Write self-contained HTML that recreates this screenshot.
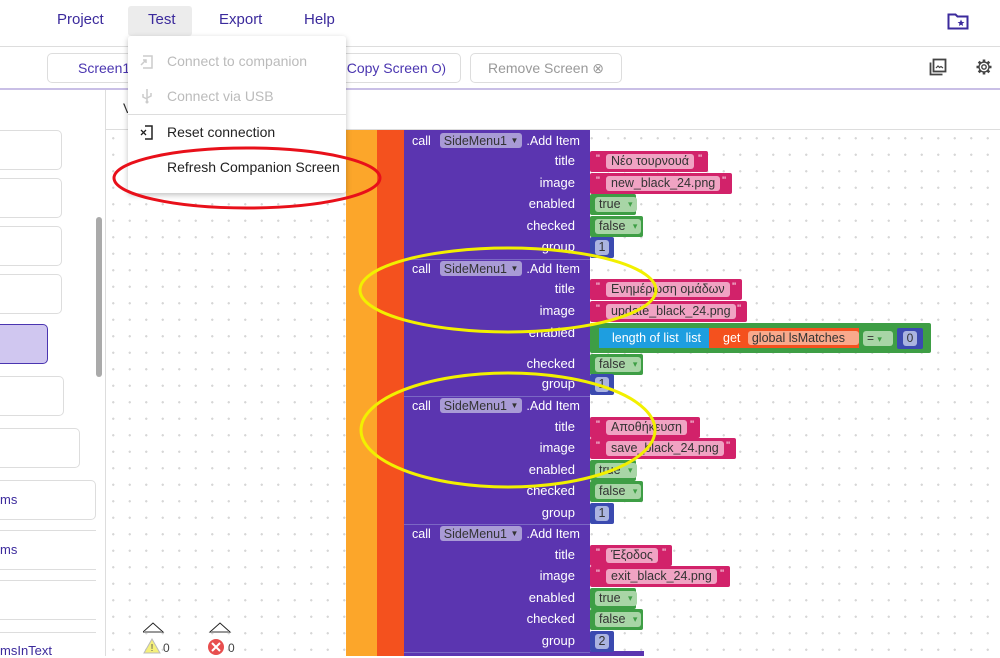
<!DOCTYPE html>
<html><head><meta charset="utf-8"><style>
*{margin:0;padding:0;box-sizing:border-box}
body{width:1000px;height:656px;overflow:hidden;position:relative;background:#fff;font-family:"Liberation Sans",sans-serif}
.a{position:absolute}
.menu{font-size:15px;color:#3b2a9c;top:11px}
.btn{position:absolute;top:53px;height:30px;border:1px solid #ddd;border-radius:5px;font-size:14px;color:#4a35b0;line-height:28px;text-align:center;background:#fff}
.ws{left:106px;top:130px;width:894px;height:526px;background-color:#fff;background-image:radial-gradient(circle,#d6d6d6 1px,transparent 1.3px);background-size:16.5px 16.5px;background-position:-1px 0}
.lab{position:absolute;color:#fff;font-size:13px;right:425px;text-align:right;height:16px;line-height:16px}
.str{position:absolute;left:590px;height:21px;background:#d2226a;border-radius:2px}
.str .f{position:absolute;left:16px;top:3px;height:15px;background:#f0a3c3;border-radius:3px;color:#333;font-size:12.5px;line-height:15px;padding:0 5px;white-space:nowrap}
.str .q{position:absolute;top:2px;color:#fff;font-size:11px}
.bool{position:absolute;left:590px;height:21px;background:#3e9e45;border-radius:2px}
.bool .f{position:absolute;left:5px;top:3px;height:15px;background:#a8d5a6;border-radius:3px;color:#333;font-size:12.5px;line-height:15px;padding:0 16px 0 4px}
.bool .f:after{content:"▾";position:absolute;right:4px;top:0;color:#3e9e45;font-size:9px}
.num{position:absolute;left:590px;width:24px;height:21px;background:#3b4ab0;border-radius:2px}
.num .f{position:absolute;left:5px;top:3px;width:14px;height:15px;background:#aab4e0;border-radius:3px;color:#333;font-size:12.5px;line-height:15px;text-align:center}
.call{position:absolute;left:412px;color:#fff;font-size:12.5px;height:16px;line-height:16px;white-space:nowrap}
.call .c{display:inline-block;background:#a99bd6;color:#333;border-radius:3px;padding:0 4px;margin:0 4px 0 9px;height:15px;line-height:15px}
.call .c i{font-style:normal;font-size:8px;vertical-align:2px}
.sep{position:absolute;left:404px;width:186px;height:1px;background:#7b68c4}
.dd{font-size:14px;color:#bbb}
</style></head><body>
<div class="a" style="left:128px;top:6px;width:64px;height:30px;background:#ececec;border-radius:3px"></div>
<div class="a menu" style="left:57px">Project</div>
<div class="a menu" style="left:148px">Test</div>
<div class="a menu" style="left:219px">Export</div>
<div class="a menu" style="left:304px">Help</div>
<svg class="a" style="left:947px;top:12px" width="22" height="18" viewBox="0 0 22 18"><path d="M1.5 2.5h7l2 2h10v12h-19z" fill="none" stroke="#3b2a9c" stroke-width="2"/><path d="M14 7.5l1 2.4 2.4.2-1.9 1.5.6 2.4-2.1-1.3-2.1 1.3.6-2.4-1.9-1.5 2.4-.2z" fill="#3b2a9c"/></svg>
<div class="a" style="left:0;top:46px;width:1000px;height:1px;background:#ddd"></div>
<div class="btn" style="left:47px;width:140px;text-align:left;padding-left:30px">Screen1</div>
<div class="btn" style="left:320px;width:141px;text-align:right;padding-right:14px">Copy Screen <span style="font-size:13px">O)</span></div>
<div class="btn" style="left:470px;width:152px;color:#999">Remove Screen ⊗</div>
<svg class="a" style="left:929px;top:58px" width="18" height="18" viewBox="0 0 18 18"><rect x="4.5" y="1.5" width="12" height="12" fill="none" stroke="#444" stroke-width="1.8"/><path d="M1.5 4.5v12h12" fill="none" stroke="#444" stroke-width="1.8"/><path d="M7 10l2-2 1.5 1.5 1.5-1 2 1.5" fill="none" stroke="#444" stroke-width="1.2"/></svg>
<svg class="a" style="left:975px;top:58px" width="18" height="18" viewBox="0 0 18 18"><g stroke="#444" stroke-width="2.6"><path d="M9 1.5v15M1.5 9h15M3.7 3.7l10.6 10.6M14.3 3.7L3.7 14.3"/></g><circle cx="9" cy="9" r="5.6" fill="#444"/><circle cx="9" cy="9" r="4.3" fill="#fff"/><circle cx="9" cy="9" r="2.2" fill="none" stroke="#444" stroke-width="1.4"/></svg>
<div class="a" style="left:0;top:88px;width:1000px;height:2px;background:#c9bfe6"></div>
<div class="a" style="left:105px;top:90px;width:1px;height:566px;background:#ddd"></div>
<div class="a" style="left:106px;top:129px;width:894px;height:1px;background:#ddd"></div>
<div class="a" style="left:123px;top:100px;font-size:14px;color:#333">V</div>
<div class="a" style="left:0;top:130px;width:62px;height:40px;border:1px solid #ddd;border-left:none;border-radius:0 5px 5px 0"></div>
<div class="a" style="left:0;top:178px;width:62px;height:40px;border:1px solid #ddd;border-left:none;border-radius:0 5px 5px 0"></div>
<div class="a" style="left:0;top:226px;width:62px;height:40px;border:1px solid #ddd;border-left:none;border-radius:0 5px 5px 0"></div>
<div class="a" style="left:0;top:274px;width:62px;height:40px;border:1px solid #ddd;border-left:none;border-radius:0 5px 5px 0"></div>
<div class="a" style="left:0;top:324px;width:48px;height:40px;border:1px solid #4a35b0;border-left:none;border-radius:0 5px 5px 0;background:#d0c7f0"></div>
<div class="a" style="left:0;top:376px;width:64px;height:40px;border:1px solid #ddd;border-left:none;border-radius:0 5px 5px 0"></div>
<div class="a" style="left:0;top:428px;width:80px;height:40px;border:1px solid #ddd;border-left:none;border-radius:0 5px 5px 0"></div>
<div class="a" style="left:0;top:480px;width:96px;height:40px;border:1px solid #ddd;border-left:none;border-radius:0 5px 5px 0"></div>
<div class="a" style="left:0;top:492px;font-size:13px;color:#3b2a9c">ms</div>
<div class="a" style="left:0;top:530px;width:96px;height:1px;background:#ddd"></div>
<div class="a" style="left:0;top:542px;font-size:13px;color:#3b2a9c">ms</div>
<div class="a" style="left:0;top:569px;width:96px;height:1px;background:#ddd"></div>
<div class="a" style="left:0;top:580px;width:96px;height:1px;background:#ddd"></div>
<div class="a" style="left:0;top:619px;width:96px;height:1px;background:#ddd"></div>
<div class="a" style="left:0;top:632px;width:96px;height:1px;background:#ddd"></div>
<div class="a" style="left:0;top:643px;font-size:13px;color:#3b2a9c">msInText</div>
<div class="a" style="left:96px;top:217px;width:6px;height:160px;background:#aaa;border-radius:3px"></div>
<div class="a ws"></div>
<div class="a" style="left:346px;top:130px;width:31px;height:526px;background:#fca62a"></div>
<div class="a" style="left:377px;top:130px;width:27px;height:526px;background:#f4511e"></div>
<div class="a" style="left:404px;top:130px;width:186px;height:526px;background:#5b35b0"></div>
<div class="a" style="left:404px;top:651px;width:240px;height:5px;background:#5b35b0"></div>
<div class="sep" style="top:259px"></div><div class="sep" style="top:396px"></div><div class="sep" style="top:524px"></div><div class="sep" style="top:652px"></div>

<div class="call" style="top:133px">call<span class="c">SideMenu1 <i>▼</i></span>.Add Item</div>
<div class="call" style="top:261px">call<span class="c">SideMenu1 <i>▼</i></span>.Add Item</div>
<div class="call" style="top:398px">call<span class="c">SideMenu1 <i>▼</i></span>.Add Item</div>
<div class="call" style="top:526px">call<span class="c">SideMenu1 <i>▼</i></span>.Add Item</div>

<div class="lab" style="top:153px">title</div><div class="str" style="top:151px;width:118px"><span class="q" style="left:6px">"</span><span class="f">Νέο τουρνουά</span><span class="q" style="right:6px">"</span></div>
<div class="lab" style="top:175px">image</div><div class="str" style="top:173px;width:142px"><span class="q" style="left:6px">"</span><span class="f">new_black_24.png</span><span class="q" style="right:6px">"</span></div>
<div class="lab" style="top:196px">enabled</div><div class="bool" style="top:194px;width:46px"><span class="f">true</span></div>
<div class="lab" style="top:218px">checked</div><div class="bool" style="top:216px;width:53px"><span class="f">false</span></div>
<div class="lab" style="top:239px">group</div><div class="num" style="top:237px"><span class="f">1</span></div>
<div class="lab" style="top:281px">title</div><div class="str" style="top:279px;width:152px"><span class="q" style="left:6px">"</span><span class="f">Ενημέρωση ομάδων</span><span class="q" style="right:6px">"</span></div>
<div class="lab" style="top:303px">image</div><div class="str" style="top:301px;width:157px"><span class="q" style="left:6px">"</span><span class="f">update_black_24.png</span><span class="q" style="right:6px">"</span></div>
<div class="lab" style="top:325px">enabled</div>
<div class="a" style="left:590px;top:323px;width:341px;height:30px;background:#3e9e45;border-radius:2px"></div>
<div class="a" style="left:599px;top:328px;width:110px;height:20px;background:#1e9ee0;color:#fff;font-size:12.5px;line-height:20px;padding-left:13px;white-space:nowrap">length of list&nbsp; list</div>
<div class="a" style="left:709px;top:328px;width:150px;height:20px;background:#f4511e;color:#fff;font-size:12.5px;line-height:20px;padding-left:14px;white-space:nowrap">get <span style="background:#f9a98c;color:#333;border-radius:3px;padding:0 14px 0 4px;margin-left:4px">global lsMatches</span></div>
<div class="a" style="left:863px;top:331px;width:30px;height:15px;background:#a8d5a6;border-radius:3px;font-size:12px;line-height:15px;padding-left:4px;color:#333">= <span style="color:#3e9e45;font-size:9px">▾</span></div>
<div class="a" style="left:897px;top:328px;width:26px;height:21px;background:#3b4ab0;border-radius:2px"><span class="a" style="left:6px;top:3px;width:14px;height:15px;background:#aab4e0;border-radius:3px;font-size:12px;line-height:15px;text-align:center;color:#333">0</span></div>
<div class="lab" style="top:356px">checked</div><div class="bool" style="top:354px;width:53px"><span class="f">false</span></div>
<div class="lab" style="top:376px">group</div><div class="num" style="top:374px"><span class="f">1</span></div>
<div class="lab" style="top:419px">title</div><div class="str" style="top:417px;width:110px"><span class="q" style="left:6px">"</span><span class="f">Αποθήκευση</span><span class="q" style="right:6px">"</span></div>
<div class="lab" style="top:440px">image</div><div class="str" style="top:438px;width:146px"><span class="q" style="left:6px">"</span><span class="f">save_black_24.png</span><span class="q" style="right:6px">"</span></div>
<div class="lab" style="top:462px">enabled</div><div class="bool" style="top:460px;width:46px"><span class="f">true</span></div>
<div class="lab" style="top:483px">checked</div><div class="bool" style="top:481px;width:53px"><span class="f">false</span></div>
<div class="lab" style="top:505px">group</div><div class="num" style="top:503px"><span class="f">1</span></div>
<div class="lab" style="top:547px">title</div><div class="str" style="top:545px;width:82px"><span class="q" style="left:6px">"</span><span class="f">Έξοδος</span><span class="q" style="right:6px">"</span></div>
<div class="lab" style="top:568px">image</div><div class="str" style="top:566px;width:140px"><span class="q" style="left:6px">"</span><span class="f">exit_black_24.png</span><span class="q" style="right:6px">"</span></div>
<div class="lab" style="top:590px">enabled</div><div class="bool" style="top:588px;width:46px"><span class="f">true</span></div>
<div class="lab" style="top:611px">checked</div><div class="bool" style="top:609px;width:53px"><span class="f">false</span></div>
<div class="lab" style="top:633px">group</div><div class="num" style="top:631px"><span class="f">2</span></div>

<svg class="a" style="left:143px;top:621px" width="100" height="35"><path d="M0 11L10 2L20 11Z" fill="#fff" stroke="#222"/><path d="M1 11h18" stroke="#999" stroke-width="2"/><path d="M67 11L77 2L87 11Z" fill="#fff" stroke="#222"/><path d="M68 11h18" stroke="#999" stroke-width="2"/><path d="M9 18L1 32h16z" fill="#f5f07a" stroke="#bbb"/><text x="9" y="30" font-size="10" text-anchor="middle" fill="#555" font-family="Liberation Sans">!</text><circle cx="73" cy="26" r="8" fill="#e84e4e"/><path d="M69 22l8 8M77 22l-8 8" stroke="#fff" stroke-width="2"/><text x="20" y="31" font-size="12" fill="#444" font-family="Liberation Sans">0</text><text x="85" y="31" font-size="12" fill="#444" font-family="Liberation Sans">0</text></svg>

<div class="a" style="left:128px;top:36px;width:218px;height:157px;background:#fff;box-shadow:0 2px 6px rgba(0,0,0,.25);border-radius:3px"></div>
<div class="a dd" style="left:167px;top:53px">Connect to companion</div>
<div class="a dd" style="left:167px;top:88px">Connect via USB</div>
<div class="a" style="left:128px;top:114px;width:218px;height:1px;background:#ddd"></div>
<div class="a" style="left:167px;top:124px;font-size:14px;color:#222">Reset connection</div>
<div class="a" style="left:167px;top:159px;font-size:14px;color:#222">Refresh Companion Screen</div>
<svg class="a" style="left:139px;top:54px" width="16" height="16"><path d="M4 2h9v12H4" fill="none" stroke="#ccc" stroke-width="1.5"/><path d="M2 11l5-5M4 6h3v3" fill="none" stroke="#ccc" stroke-width="1.5"/></svg>
<svg class="a" style="left:140px;top:88px" width="14" height="16"><path d="M7 1v14M3 6v3l4 2M11 5v3l-4 2" fill="none" stroke="#ccc" stroke-width="1.5"/><circle cx="7" cy="14" r="1.5" fill="#ccc"/></svg>
<svg class="a" style="left:139px;top:124px" width="16" height="16"><path d="M6 2h7v13H6" fill="none" stroke="#222" stroke-width="1.5"/><path d="M2 6l5 5M7 6l-5 5" stroke="#222" stroke-width="1.3"/></svg>

<svg class="a" style="left:0;top:0" width="1000" height="656"><ellipse cx="247" cy="178" rx="133" ry="30" fill="none" stroke="#e8101a" stroke-width="3"/><ellipse cx="508" cy="290" rx="148" ry="42" fill="none" stroke="#f2f000" stroke-width="3"/><ellipse cx="508" cy="430" rx="147" ry="57" fill="none" stroke="#f2f000" stroke-width="3"/></svg>
</body></html>
